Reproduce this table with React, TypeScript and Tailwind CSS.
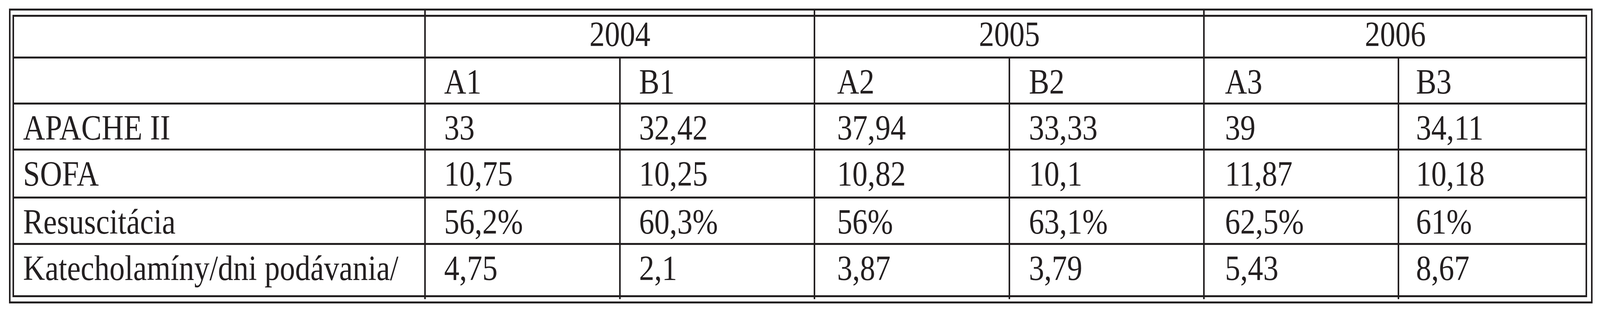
import React from 'react';

const line = 'bg-[#231f20]';

const years = ['2004', '2005', '2006'];
const groups = ['A1', 'B1', 'A2', 'B2', 'A3', 'B3'];

// left padding of each data column, measured from the reference
const padCls = ['pl-[47px]', 'pl-[47px]', 'pl-[56px]', 'pl-[48px]', 'pl-[52px]', 'pl-[43px]'];

const rows: { label: string; values: string[] }[] = [
  { label: 'APACHE II', values: ['33', '32,42', '37,94', '33,33', '39', '34,11'] },
  { label: 'SOFA', values: ['10,75', '10,25', '10,82', '10,1', '11,87', '10,18'] },
  { label: 'Resuscitácia', values: ['56,2%', '60,3%', '56%', '63,1%', '62,5%', '61%'] },
  { label: 'Katecholamíny/dni podávania/', values: ['4,75', '2,1', '3,87', '3,79', '5,43', '8,67'] },
];

// the print face is a narrow Times, so squeeze the glyphs a little
function Txt({ children, center = false }: { children: React.ReactNode; center?: boolean }) {
  return (
    <span className={`inline-block whitespace-nowrap scale-x-[0.868] ${center ? 'origin-center' : 'origin-left'}`}>
      {children}
    </span>
  );
}

function Cell({
  children,
  className = '',
  tickBottom = false,
}: {
  children?: React.ReactNode;
  className?: string;
  tickBottom?: boolean;
}) {
  return (
    <div className={`relative bg-white pt-[15px] ${className}`}>
      {children && <Txt>{children}</Txt>}
      {tickBottom && <span className={`absolute left-[-4px] bottom-[-10px] h-[10px] w-[4px] ${line}`} />}
    </div>
  );
}

export default function App() {
  return (
    <div
      className="w-full h-[800px] bg-white pt-[22px] pl-[23px] text-[#231f20]"
      style={{ fontFamily: '"Liberation Serif", "Times New Roman", serif' }}
    >
      <div className="w-[4054px] h-[756px] border-x-[4px] border-y-[5px] border-[#231f20] pt-[11px] pl-[5px] pr-[10px] pb-[11px]">
        <div
          className={`grid grid-cols-[1050px_495px_494px_495px_494px_494px_477px] grid-rows-[102px_113px_113px_118px_114px_129px] gap-x-[4px] gap-y-[5px] px-[4px] py-[5px] ${line} text-[90px] leading-[90px]`}
        >
          {/* year header */}
          <div className="bg-white" />
          {years.map((y) => (
            <div key={y} className="relative col-span-2 bg-white text-center">
              <span className={`absolute left-[-4px] top-[-16px] h-[11px] w-[4px] ${line}`} />
              <Txt center>{y}</Txt>
            </div>
          ))}

          {/* group header */}
          <Cell />
          {groups.map((g, i) => (
            <Cell key={g} className={padCls[i]}>
              {g}
            </Cell>
          ))}

          {rows.map((r, ri) => {
            const last = ri === rows.length - 1;
            return (
              <React.Fragment key={r.label}>
                <Cell className="pl-[23px]">{r.label}</Cell>
                {r.values.map((v, i) => (
                  <Cell key={i} className={padCls[i]} tickBottom={last}>
                    {v}
                  </Cell>
                ))}
              </React.Fragment>
            );
          })}
        </div>
      </div>
    </div>
  );
}
